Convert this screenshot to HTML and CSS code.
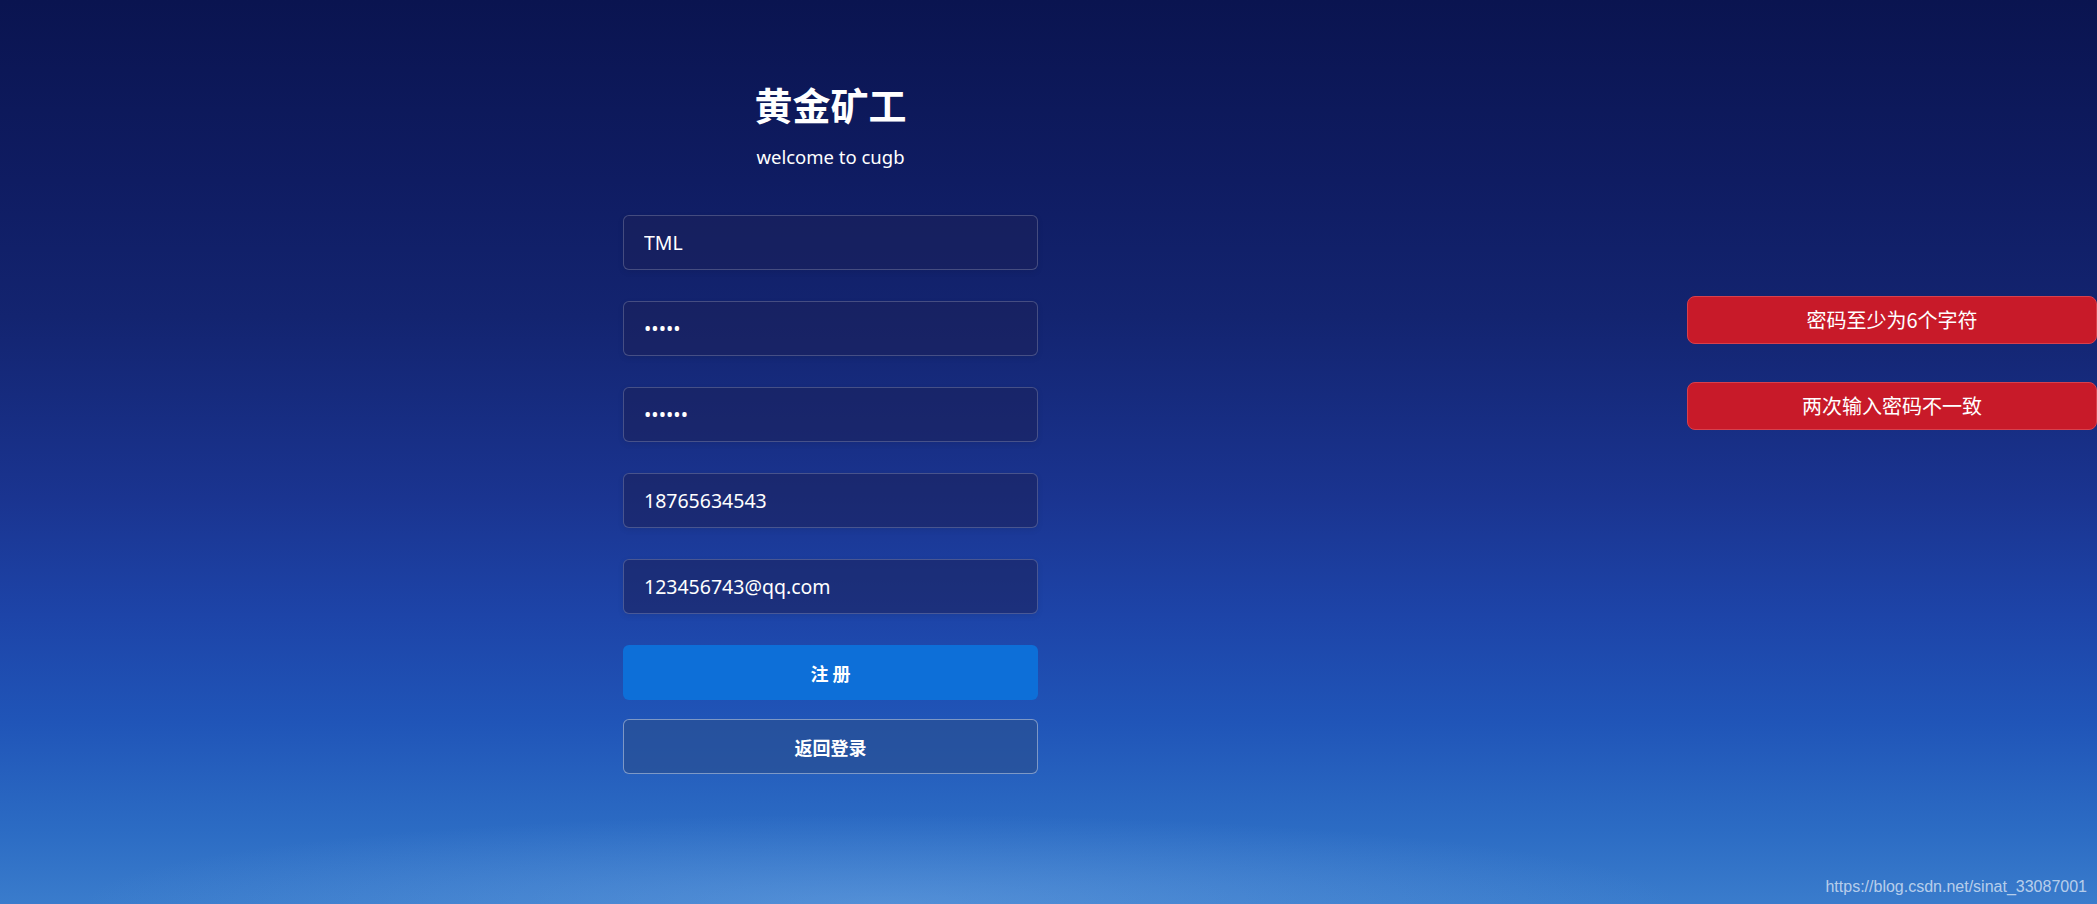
FILE: index.html
```html
<!DOCTYPE html>
<html lang="zh-CN">
<head>
  <meta charset="UTF-8">
  <meta name="viewport" content="width=device-width, initial-scale=1.0">
  <title>黄金矿工 - 注册</title>
  <link rel="stylesheet" href="styles.css">
</head>
<body>

  <div class="register">
    <!-- 标题 -->
    <h1>黄金矿工</h1>
    <p class="subtitle">welcome to cugb</p>

    <form class="register-form">
      <input type="text" class="field" value="TML" placeholder="用户名">
      <input type="password" class="field" value="12345" placeholder="密码">
      <input type="password" class="field" value="123456" placeholder="确认密码">
      <input type="text" class="field" value="18765634543" placeholder="手机号">
      <input type="text" class="field" value="123456743@qq.com" placeholder="邮箱">

      <button type="button" class="btn-register">注 册</button>
      <button type="button" class="btn-back">返回登录</button>
    </form>
  </div>

  <!-- 错误提示 -->
  <div class="toasts">
    <div class="toast">密码至少为6个字符</div>
    <div class="toast">两次输入密码不一致</div>
  </div>

  <div class="watermark">https://blog.csdn.net/sinat_33087001</div>

</body>
</html>
```

FILE: styles.css
```css
* {
  margin: 0;
  padding: 0;
  box-sizing: border-box;
}
body {
  font-family: 'Noto Sans', 'Noto Sans CJK SC', sans-serif;
  height: 100vh;
  overflow: hidden;
  color: #fff;
  background:
    radial-gradient(ellipse 800px 90px at 42% 100%, rgba(130, 180, 235, 0.35), rgba(130, 180, 235, 0) 100%),
    linear-gradient(180deg, #0a1450 0%, #0f1c62 20%, #132470 35%, #1a3490 55%, #1d44a8 68%, #2055b8 80%, #2c6cc4 92%, #3a7ccc 100%);
}
.register {
  width: 415px;
  margin-left: 623px;
  padding-top: 85px;
  text-align: center;
}
h1 {
  font-family: 'Noto Sans CJK SC', sans-serif;
  font-size: 38px;
  line-height: 38px;
  font-weight: bold;
}
.subtitle {
  font-size: 18.5px;
  line-height: 19px;
  margin-top: 24px;
}
.register-form {
  display: flex;
  flex-direction: column;
  margin-top: 49px;
}
.field {
  height: 55px;
  margin-bottom: 31px;
  padding: 0 20px;
  font-family: 'Noto Sans', 'Noto Sans CJK SC', sans-serif;
  font-size: 19.5px;
  color: #fff;
  background-color: rgba(28, 32, 90, 0.55);
  border: 1px solid rgba(255, 255, 255, 0.2);
  border-radius: 6px;
  box-shadow: 0 2px 6px rgba(0, 0, 0, 0.08);
  outline: none;
}
.btn-register,
.btn-back {
  height: 55px;
  font-family: 'Noto Sans CJK SC', sans-serif;
  font-size: 18px;
  font-weight: bold;
  color: #fff;
  border-radius: 6px;
  cursor: pointer;
}
.btn-register {
  background-color: #0d6fd8;
  border: none;
  margin-bottom: 19px;
}
.btn-back {
  background-color: rgba(40, 80, 150, 0.75);
  border: 1px solid rgba(255, 255, 255, 0.4);
}
.toasts {
  position: absolute;
  top: 296px;
  left: 1687px;
  display: flex;
  flex-direction: column;
  gap: 38px;
}
.toast {
  width: 410px;
  height: 48px;
  line-height: 46px;
  text-align: center;
  font-family: 'Noto Sans CJK SC', sans-serif;
  font-size: 20px;
  color: #fff;
  background-color: #c81a29;
  border: 1px solid #d8404c;
  border-radius: 8px;
}
.watermark {
  position: absolute;
  right: 10px;
  bottom: 8px;
  font-family: 'Liberation Sans', Arial, sans-serif;
  font-size: 16px;
  color: rgba(255, 255, 255, 0.65);
}
```
